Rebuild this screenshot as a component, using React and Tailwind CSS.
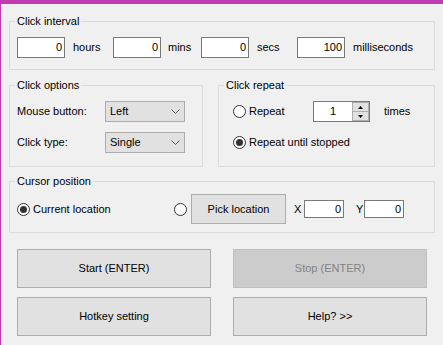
import React from 'react';

const font = { fontFamily: '"Liberation Sans", Arial, sans-serif' };

const Group = ({ title, className = '', children }) => (
  <fieldset className={`border border-[#dcdcdc] px-[7px] ${className}`}>
    <legend className="ml-[-2px] px-[2px] text-[11px] leading-[14px] text-black">{title}</legend>
    {children}
  </fieldset>
);

const NumBox = ({ value, className = '' }) => (
  <div className={`flex items-center justify-end bg-white border border-[#7a7a7a] pr-[2px] text-[11px] text-black ${className}`}>
    {value}
  </div>
);

const Radio = ({ checked }) => (
  <span className="flex h-[13px] w-[13px] shrink-0 items-center justify-center rounded-full border border-[#333] bg-white">
    {checked && <span className="h-[7px] w-[7px] rounded-full bg-[#333]" />}
  </span>
);

const Select = ({ value }) => (
  <div className="flex h-[21px] w-[80px] items-center justify-between border border-[#adadad] bg-[#e1e1e1] pl-[4px] pr-[4px] text-[11px] text-black">
    <span>{value}</span>
    <svg width="9" height="5" viewBox="0 0 9 5">
      <polyline points="0.5,0.5 4.5,4.5 8.5,0.5" fill="none" stroke="#5a5a5a" strokeWidth="1" />
    </svg>
  </div>
);

const Btn = ({ label, disabled }) => (
  <button
    className={`flex h-[39px] w-[194px] items-center justify-center border text-[11px] ${
      disabled ? 'border-[#bfbfbf] bg-[#cccccc] text-[#838383]' : 'border-[#adadad] bg-[#e1e1e1] text-black'
    }`}
  >
    {label}
  </button>
);

export default function App() {
  return (
    <div style={font} className="h-[345px] w-[443px] overflow-hidden bg-[#f0f0f0] text-[11px] text-black">
      <div className="h-[4px] bg-[#c13bb2]" />
      <div className="h-[341px] border-l border-[#c13bb2] pl-[8px] pr-[8px] pt-[10px]">
        {/* Click interval */}
        <Group title="Click interval" className="pb-[11px] pt-[9px]">
          <div className="flex h-[21px] items-center">
            <div className="flex w-[96px] items-center">
              <NumBox value="0" className="h-[21px] w-[48px]" />
              <span className="ml-[8px]">hours</span>
            </div>
            <div className="flex w-[88px] items-center">
              <NumBox value="0" className="h-[21px] w-[48px]" />
              <span className="ml-[7px]">mins</span>
            </div>
            <div className="flex w-[96px] items-center">
              <NumBox value="0" className="h-[21px] w-[48px]" />
              <span className="ml-[8px]">secs</span>
            </div>
            <div className="flex items-center">
              <NumBox value="100" className="h-[21px] w-[48px]" />
              <span className="ml-[8px]">milliseconds</span>
            </div>
          </div>
        </Group>

        {/* options + repeat */}
        <div className="mt-[8px] flex gap-[15px]">
          <Group title="Click options" className="w-[194px] pb-[13px] pt-[9px]">
            <div className="flex h-[21px] items-center">
              <span className="w-[88px]">Mouse button:</span>
              <Select value="Left" />
            </div>
            <div className="mt-[10px] flex h-[21px] items-center">
              <span className="w-[88px]">Click type:</span>
              <Select value="Single" />
            </div>
          </Group>
          <Group title="Click repeat" className="flex-1 pt-[9px]">
            <div className="flex h-[21px] items-center pl-[7px]">
              <Radio />
              <span className="ml-[3px] w-[64px]">Repeat</span>
              <div className="flex h-[21px] w-[57px] border border-[#7a7a7a] bg-white">
                <span className="flex flex-1 items-center justify-center">1</span>
                <div className="flex w-[17px] flex-col">
                  <span className="flex flex-1 items-center justify-center border border-[#adadad] bg-[#e1e1e1]">
                    <svg width="5" height="3" viewBox="0 0 5 3"><polygon points="0,3 2.5,0 5,3" fill="#000" /></svg>
                  </span>
                  <span className="flex flex-1 items-center justify-center border border-t-0 border-[#adadad] bg-[#e1e1e1]">
                    <svg width="5" height="3" viewBox="0 0 5 3"><polygon points="0,0 2.5,3 5,0" fill="#000" /></svg>
                  </span>
                </div>
              </div>
              <span className="ml-[14px]">times</span>
            </div>
            <div className="mt-[10px] flex h-[21px] items-center pl-[7px]">
              <Radio checked />
              <span className="ml-[3px]">Repeat until stopped</span>
            </div>
          </Group>
        </div>

        {/* Cursor position */}
        <Group title="Cursor position" className="mt-[7px] pb-[8px] pt-[6px]">
          <div className="flex h-[30px] items-center">
            <div className="flex w-[157px] items-center">
              <Radio checked />
              <span className="ml-[3px]">Current location</span>
            </div>
            <Radio />
            <button className="ml-[4px] flex h-[30px] w-[95px] items-center justify-center border border-[#adadad] bg-[#e1e1e1] text-[11px]">
              Pick location
            </button>
            <span className="ml-[8px] w-[10px]">X</span>
            <NumBox value="0" className="h-[18px] w-[40px]" />
            <span className="ml-[12px] w-[8px]">Y</span>
            <NumBox value="0" className="h-[18px] w-[40px]" />
          </div>
        </Group>

        {/* action buttons */}
        <div className="ml-[8px] mt-[16px] grid w-[410px] grid-cols-[194px_194px] gap-x-[22px] gap-y-[9px]">
          <Btn label="Start (ENTER)" />
          <Btn label="Stop (ENTER)" disabled />
          <Btn label="Hotkey setting" />
          <Btn label="Help? >>" />
        </div>
      </div>
    </div>
  );
}
